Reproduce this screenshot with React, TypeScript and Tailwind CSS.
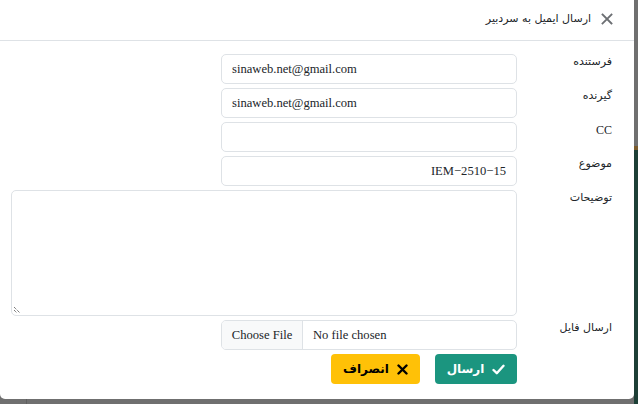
import React from "react";

const fa = { fontFamily: '"DejaVu Sans", "Noto Sans", sans-serif' };
const serif = { fontFamily: '"Liberation Serif", "DejaVu Serif", serif' };

function Label({ children }: { children: React.ReactNode }) {
  return (
    <div className="w-[95px] shrink-0 pr-0 text-[11px] leading-[16px] text-[#212529]" style={fa}>
      {children}
    </div>
  );
}

function TextInput({ value, rtl }: { value?: string; rtl?: boolean }) {
  return (
    <div
      dir="ltr"
      className={`w-[296px] h-[30px] rounded-[5px] border border-[#dee2e6] bg-white flex items-center px-[10px] text-[12.6px] text-[#212529] ${rtl ? "justify-end" : "justify-start"}`}
      style={serif}
    >
      {value}
    </div>
  );
}

export default function App() {
  return (
    <div className="relative w-[638px] h-[404px] overflow-hidden bg-[#6f6f6f]">
      <div className="absolute right-0 top-[146px] w-[4px] h-[4px] bg-[#7a5b2c]" />
      <div className="absolute right-0 top-[150px] w-[4px] h-[254px] bg-[#1d3f36]" />
      <div className="absolute left-[26px] bottom-0 w-[1px] h-[5px] bg-[#5f5f5f]" />
      <div dir="rtl" className="relative w-[634px] h-[399px] bg-white rounded-br-[5px] rounded-bl-[5px]">
        {/* header */}
        <div className="h-[41px] border-b border-[#dee2e6] flex items-center pr-[21px] pl-4">
          <svg width="12" height="12" viewBox="0 0 12 12" className="ml-[10px] mt-[-2px]">
            <path d="M1.5 1.5 L10.5 10.5 M10.5 1.5 L1.5 10.5" stroke="#6c6f73" strokeWidth="1.8" strokeLinecap="square" />
          </svg>
          <span className="text-[11px] text-[#212529] mt-[-1px]" style={fa}>
            ارسال ایمیل به سردبیر
          </span>
        </div>
        {/* body */}
        <div className="pt-[13px] pr-[22px] pl-[11px] flex flex-col gap-[4px]">
          <div className="flex">
            <Label>فرستنده</Label>
            <TextInput value="sinaweb.net@gmail.com" />
          </div>
          <div className="flex">
            <Label>گیرنده</Label>
            <TextInput value="sinaweb.net@gmail.com" />
          </div>
          <div className="flex">
            <Label>
              <span style={serif} className="text-[12px]">CC</span>
            </Label>
            <TextInput />
          </div>
          <div className="flex">
            <Label>موضوع</Label>
            <TextInput value="IEM−2510−15" rtl />
          </div>
          <div className="flex">
            <Label>توضیحات</Label>
            <div className="relative flex-1 h-[126px] rounded-[5px] border border-[#dee2e6] bg-white">
              <svg width="8" height="8" viewBox="0 0 8 8" className="absolute left-[1px] bottom-[1px]">
                <path d="M1 1 L7 7 M1 4 L4 7" stroke="#444" strokeWidth="1" strokeDasharray="1 1" />
              </svg>
            </div>
          </div>
          <div className="flex">
            <Label>ارسال فایل</Label>
            <div dir="ltr" className="w-[296px] h-[30px] rounded-[5px] border border-[#dee2e6] bg-white flex items-stretch text-[12.6px] text-[#212529] overflow-hidden" style={serif}>
              <div className="w-[81px] shrink-0 bg-[#f8f9fa] border-r border-[#dee2e6] flex items-center justify-center">Choose File</div>
              <div className="flex items-center pl-[10px]">No file chosen</div>
            </div>
          </div>
          <div className="flex">
            <div className="w-[95px] shrink-0" />
            <div className="flex gap-[15px]">
              <button className="w-[82px] h-[30px] rounded-[4px] bg-[#1b957f] text-white flex items-center justify-center gap-[8px] text-[12px] font-bold" style={fa}>
                <svg width="13" height="11" viewBox="0 0 13 11">
                  <path d="M1.5 6 L4.8 9.2 L11.5 1.8" stroke="white" strokeWidth="2.4" fill="none" strokeLinecap="round" strokeLinejoin="round" />
                </svg>
                <span>ارسال</span>
              </button>
              <button className="w-[89px] h-[30px] rounded-[4px] bg-[#ffc107] text-black flex items-center justify-center gap-[8px] text-[12px] font-bold" style={fa}>
                <svg width="11" height="11" viewBox="0 0 11 11">
                  <path d="M1.5 1.5 L9.5 9.5 M9.5 1.5 L1.5 9.5" stroke="black" strokeWidth="2.4" strokeLinecap="round" />
                </svg>
                <span>انصراف</span>
              </button>
            </div>
          </div>
        </div>
      </div>
    </div>
  );
}
